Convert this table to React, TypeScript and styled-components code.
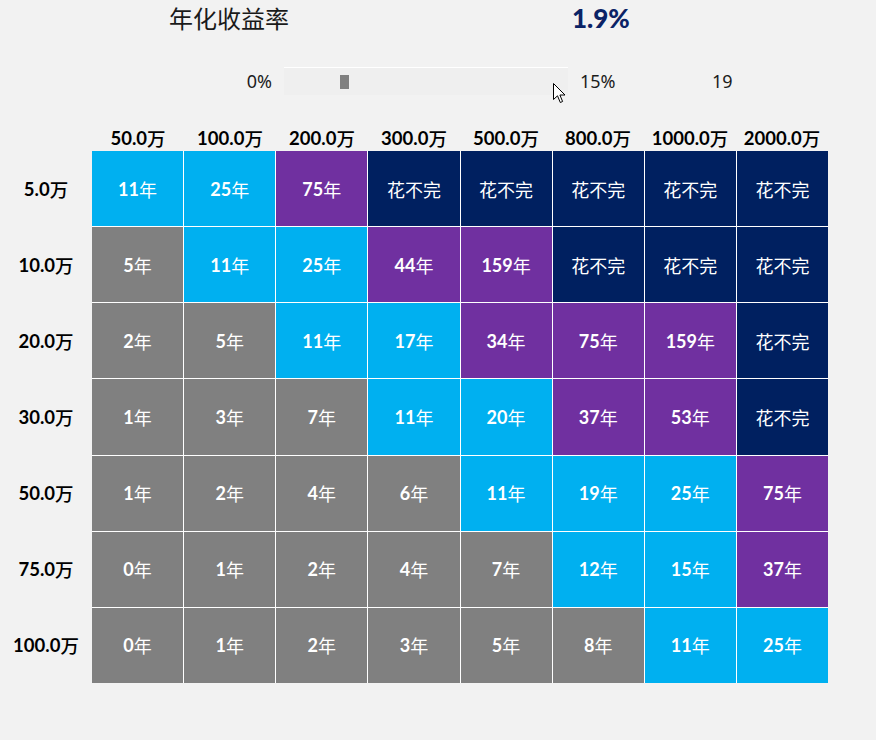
import React from "react";
import styled, { createGlobalStyle } from "styled-components";

const GlobalStyle = createGlobalStyle`
  html, body {
    margin: 0;
    padding: 0;
    background: #f2f2f2;
  }
  body {
    font-family: "Noto Sans", "Noto Sans CJK SC", sans-serif;
  }
`;

const Page = styled.div`
  position: relative;
  width: 876px;
  height: 740px;
  background: #f2f2f2;
  overflow: hidden;
`;

const TitleRow = styled.div`
  display: flex;
  align-items: flex-start;
  box-sizing: border-box;
  height: 32px;
  padding: 5.5px 0 0 169px;
`;

const Title = styled.div`
  width: 403px;
  font-family: "Noto Sans CJK SC", sans-serif;
  font-size: 24px;
  line-height: 24px;
  color: #1a1a1a;
`;

const RateValue = styled.div`
  margin-top: 0.5px;
  font-family: Lato, "Noto Sans", sans-serif;
  font-weight: 900;
  font-size: 26px;
  line-height: 24px;
  color: #0b2366;
`;

const SliderRow = styled.div`
  display: flex;
  align-items: center;
  height: 28px;
  margin-top: 35px;
`;

const SliderLabel = styled.div<{ $w: number; $align: "left" | "right" }>`
  width: ${(p) => p.$w}px;
  text-align: ${(p) => p.$align};
  font-family: "Noto Sans", "Open Sans", sans-serif;
  font-size: 18px;
  line-height: 28px;
  color: #1c1c1c;
`;

const Track = styled.div`
  position: relative;
  width: 284px;
  height: 28px;
  margin: 0 12px;
  background: #efefef;
  border-top: 1px solid #ffffff;
  box-sizing: border-box;
`;

const Thumb = styled.div`
  position: absolute;
  left: 56px;
  top: 7px;
  width: 9px;
  height: 14px;
  background: #808080;
`;

const HeaderRow = styled.div`
  display: flex;
  height: 26px;
  margin-top: 30px;
  padding-left: 92px;
`;

const HeaderCell = styled.div`
  width: 92px;
  display: flex;
  align-items: center;
  justify-content: center;
  font-family: Lato, "Noto Sans CJK SC", sans-serif;
  font-weight: 700;
  font-size: 18.5px;
  color: #000;
  white-space: nowrap;
`;

const Unit = styled.span`
  font-family: "Noto Sans CJK SC", sans-serif;
  font-weight: 500;
`;

const Body = styled.div`
  display: flex;
`;

const RowLabels = styled.div`
  display: grid;
  grid-template-rows: repeat(7, 76px);
  width: 92px;
`;

const RowLabel = styled.div`
  display: flex;
  align-items: center;
  justify-content: center;
  font-family: Lato, "Noto Sans CJK SC", sans-serif;
  font-weight: 700;
  font-size: 18.5px;
  color: #000;
  white-space: nowrap;
`;

const Matrix = styled.div`
  display: grid;
  width: 736px;
  height: 532px;
  grid-template-columns: repeat(8, 1fr);
  grid-template-rows: repeat(7, 1fr);
  gap: 1px;
  background: #ffffff;
`;

type Tone = "gray" | "blue" | "purple" | "navy";

const toneColor: Record<Tone, string> = {
  gray: "#808080",
  blue: "#00b0f0",
  purple: "#7030a0",
  navy: "#002060",
};

const Cell = styled.div<{ $tone: Tone }>`
  display: flex;
  align-items: center;
  justify-content: center;
  background: ${(p) => toneColor[p.$tone]};
  color: #ffffff;
  font-size: 18px;
  white-space: nowrap;
`;

const Num = styled.span`
  font-family: Lato, sans-serif;
  font-weight: 700;
`;

const CjkText = styled.span`
  font-family: "Noto Sans CJK SC", sans-serif;
  font-weight: 400;
`;

const Cursor = styled.svg`
  position: absolute;
  left: 553px;
  top: 83px;
`;

const cols = ["50.0", "100.0", "200.0", "300.0", "500.0", "800.0", "1000.0", "2000.0"];
const rows = ["5.0", "10.0", "20.0", "30.0", "50.0", "75.0", "100.0"];

const X = null;
const data: (number | null)[][] = [
  [11, 25, 75, X, X, X, X, X],
  [5, 11, 25, 44, 159, X, X, X],
  [2, 5, 11, 17, 34, 75, 159, X],
  [1, 3, 7, 11, 20, 37, 53, X],
  [1, 2, 4, 6, 11, 19, 25, 75],
  [0, 1, 2, 4, 7, 12, 15, 37],
  [0, 1, 2, 3, 5, 8, 11, 25],
];

const toneOf = (v: number | null): Tone => {
  if (v === null) return "navy";
  if (v < 11) return "gray";
  if (v <= 25) return "blue";
  return "purple";
};

export default function App() {
  return (
    <Page>
      <GlobalStyle />
      <TitleRow>
        <Title>年化收益率</Title>
        <RateValue>1.9%</RateValue>
      </TitleRow>
      <SliderRow>
        <SliderLabel $w={272} $align="right">0%</SliderLabel>
        <Track>
          <Thumb />
        </Track>
        <SliderLabel $w={132} $align="left">15%</SliderLabel>
        <SliderLabel $w={40} $align="left">19</SliderLabel>
      </SliderRow>
      <HeaderRow>
        {cols.map((c) => (
          <HeaderCell key={c}>
            {c}
            <Unit>万</Unit>
          </HeaderCell>
        ))}
      </HeaderRow>
      <Body>
        <RowLabels>
          {rows.map((r) => (
            <RowLabel key={r}>
              {r}
              <Unit>万</Unit>
            </RowLabel>
          ))}
        </RowLabels>
        <Matrix>
          {data.map((row, ri) =>
            row.map((v, ci) => (
              <Cell key={`${ri}-${ci}`} $tone={toneOf(v)}>
                {v === null ? (
                  <CjkText>花不完</CjkText>
                ) : (
                  <>
                    <Num>{v}</Num>
                    <CjkText>年</CjkText>
                  </>
                )}
              </Cell>
            ))
          )}
        </Matrix>
      </Body>
      <Cursor width="14" height="22" viewBox="0 0 14 22">
        <path
          d="M0.5 0.5 L0.5 16.5 L4.5 12.8 L7.3 19.5 L9.6 18.5 L6.9 12 L12 12 Z"
          fill="#ffffff"
          stroke="#000000"
          strokeWidth="1"
          strokeLinejoin="miter"
        />
      </Cursor>
    </Page>
  );
}
